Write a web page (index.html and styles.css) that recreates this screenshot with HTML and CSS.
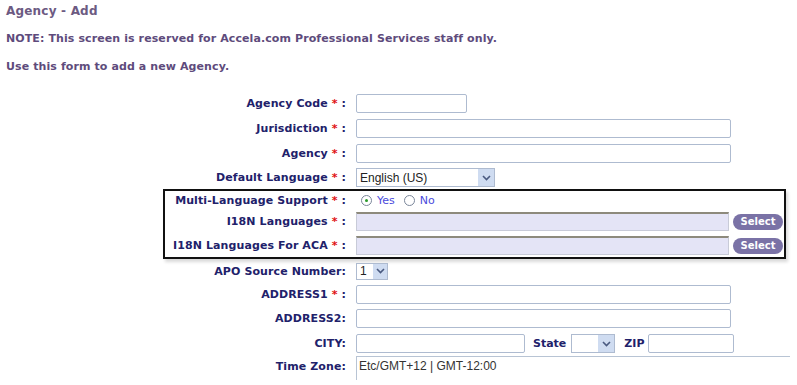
FILE: index.html
```html
<!DOCTYPE html>
<html lang="en">
<head>
    <meta charset="UTF-8">
    <title>Agency - Add</title>
    <link rel="stylesheet" href="styles.css">
</head>
<body>
    <h2 class="title">Agency - Add</h2>
    <p class="note">NOTE: This screen is reserved for Accela.com Professional Services staff only.</p>
    <p class="note">Use this form to add a new Agency.</p>

    <div class="form">
        <div class="row">
            <label class="lbl">Agency Code <span class="req">*</span> :</label>
            <input type="text" class="txt w-code">
        </div>
        <div class="row">
            <label class="lbl">Jurisdiction <span class="req">*</span> :</label>
            <input type="text" class="txt w-long">
        </div>
        <div class="row">
            <label class="lbl">Agency <span class="req">*</span> :</label>
            <input type="text" class="txt w-long">
        </div>
        <div class="row short">
            <label class="lbl">Default Language <span class="req">*</span> :</label>
            <span class="sel w-lang">
                <span class="sel-val">English (US)</span>
                <span class="sel-btn"><svg width="9" height="6" viewBox="0 0 9 6"><path d="M1 1 L4.5 4.5 L8 1" fill="none" stroke="#4a5a80" stroke-width="1.6"/></svg></span>
            </span>
        </div>

        <div class="box">
            <div class="row radio-row">
                <label class="lbl">Multi-Language Support <span class="req">*</span> :</label>
                <span class="radio on"></span><span class="opt">Yes</span>
                <span class="radio"></span><span class="opt">No</span>
            </div>
            <div class="row">
                <label class="lbl">I18N Languages <span class="req">*</span> :</label>
                <input type="text" class="txt i18n">
                <button class="pick">Select</button>
            </div>
            <div class="row short">
                <label class="lbl">I18N Languages For ACA <span class="req">*</span> :</label>
                <input type="text" class="txt i18n">
                <button class="pick">Select</button>
            </div>
        </div>

        <div class="row apo">
            <label class="lbl">APO Source Number:</label>
            <span class="sel w-apo">
                <span class="sel-val">1</span>
                <span class="sel-btn"><svg width="9" height="6" viewBox="0 0 9 6"><path d="M1 1 L4.5 4.5 L8 1" fill="none" stroke="#4a5a80" stroke-width="1.6"/></svg></span>
            </span>
        </div>
        <div class="row short">
            <label class="lbl">ADDRESS1 <span class="req">*</span> :</label>
            <input type="text" class="txt w-long">
        </div>
        <div class="row">
            <label class="lbl">ADDRESS2:</label>
            <input type="text" class="txt w-long">
        </div>
        <div class="row">
            <label class="lbl">CITY:</label>
            <input type="text" class="txt w-city">
            <label class="lbl-in state">State</label>
            <span class="sel w-state">
                <span class="sel-val"></span>
                <span class="sel-btn"><svg width="9" height="6" viewBox="0 0 9 6"><path d="M1 1 L4.5 4.5 L8 1" fill="none" stroke="#4a5a80" stroke-width="1.6"/></svg></span>
            </span>
            <label class="lbl-in zip">ZIP</label>
            <input type="text" class="txt w-zip">
        </div>
        <div class="row tz">
            <label class="lbl">Time Zone:</label>
            <span class="tz-val">Etc/GMT+12 | GMT-12:00</span>
        </div>
    </div>
</body>
</html>
```

FILE: styles.css
```css
body {
    margin: 0;
    padding: 0 0 0 6px;
    font-family: "DejaVu Sans", Verdana, sans-serif;
    background: #fff;
    overflow: hidden;
}
.title {
    margin: 2px 0 0;
    height: 18px;
    font-size: 12px;
    line-height: 18px;
    letter-spacing: 0.2px;
    color: #6c5a82;
}
.note {
    margin: 10px 0 0;
    height: 18px;
    font-size: 11px;
    line-height: 18px;
    letter-spacing: 0.1px;
    font-weight: bold;
    color: #5e4b7c;
}
.form {
    margin-top: 15px;
    margin-left: -6px;
}
.row {
    display: flex;
    align-items: center;
    height: 25px;
}
.row.short {
    height: 23px;
}
.lbl {
    flex: none;
    width: 346px;
    box-sizing: border-box;
    text-align: right;
    margin-right: 10px;
    font-size: 11px;
    font-weight: bold;
    letter-spacing: 0.1px;
    color: #21216a;
    white-space: nowrap;
}
.req {
    color: #e01010;
}
.txt {
    flex: none;
    box-sizing: border-box;
    height: 19px;
    margin: 0;
    border: 1px solid #aebbd0;
    border-radius: 2px;
    background: #fff;
    padding: 0 2px;
}
.w-code { width: 111px; }
.w-long { width: 375px; }
.w-city { width: 169px; }
.w-zip { width: 86px; }

.sel {
    flex: none;
    box-sizing: border-box;
    display: flex;
    align-items: center;
    height: 19px;
    border: 1px solid #aebbd0;
    background: #fff;
    font-family: "Liberation Sans", Arial, sans-serif;
    font-size: 12px;
    color: #222;
}
.sel-val {
    flex: 1;
    padding-left: 3px;
}
.sel-btn {
    width: 16px;
    height: 17px;
    display: flex;
    align-items: center;
    justify-content: center;
    background: #cfdcf1;
}
.w-lang { width: 139px; }
.w-apo { width: 32px; height: 17px; }
.w-apo .sel-btn { height: 15px; width: 14px; }
.w-state { width: 44px; }

.box {
    margin-left: 163px;
    width: 623px;
    box-sizing: border-box;
    border: 2px solid #111;
    box-shadow: 2px 3px 3px rgba(0, 0, 0, 0.15);
}
.box .lbl {
    width: 181px;
}
.radio-row {
    height: 18px;
}
.radio {
    flex: none;
    box-sizing: border-box;
    width: 11px;
    height: 11px;
    border: 1px solid #7a869a;
    border-radius: 50%;
    background: #fff;
    margin-left: 5px;
    position: relative;
}
.radio.on::after {
    content: "";
    position: absolute;
    left: 3px;
    top: 3px;
    width: 3px;
    height: 3px;
    border-radius: 50%;
    background: #2a9a2a;
}
.opt {
    font-size: 11px;
    color: #4a4adc;
    margin-left: 5px;
    margin-right: 4px;
}
.i18n {
    width: 373px;
    background: #e4e4f6;
    border: 1px solid #c8cbd8;
    border-top: 2px solid #8d8a7c;
    border-radius: 0;
}
.pick {
    flex: none;
    margin-left: 4px;
    width: 50px;
    height: 16px;
    padding: 0;
    border: none;
    border-radius: 8px;
    background: #7a72a6;
    color: #fff;
    font-family: "DejaVu Sans", Verdana, sans-serif;
    font-size: 10px;
    font-weight: bold;
    line-height: 16px;
}
.apo {
    height: 24px;
}
.lbl-in {
    font-size: 11px;
    font-weight: bold;
    color: #21216a;
}
.state {
    margin-left: 8px;
    margin-right: 5px;
}
.zip {
    margin-left: 9px;
    margin-right: 4px;
}
.tz {
    align-items: stretch;
    height: 24px;
}
.tz .lbl {
    line-height: 20px;
    margin-top: 1px;
}
.tz-val {
    flex: 1;
    margin-right: 7px;
    border-top: 1px solid #b8c4d4;
    border-left: 1px solid #b8c4d4;
    padding-left: 2px;
    padding-top: 0;
    font-family: "Liberation Sans", Arial, sans-serif;
    font-size: 12px;
    line-height: 18px;
    color: #333;
}
```
